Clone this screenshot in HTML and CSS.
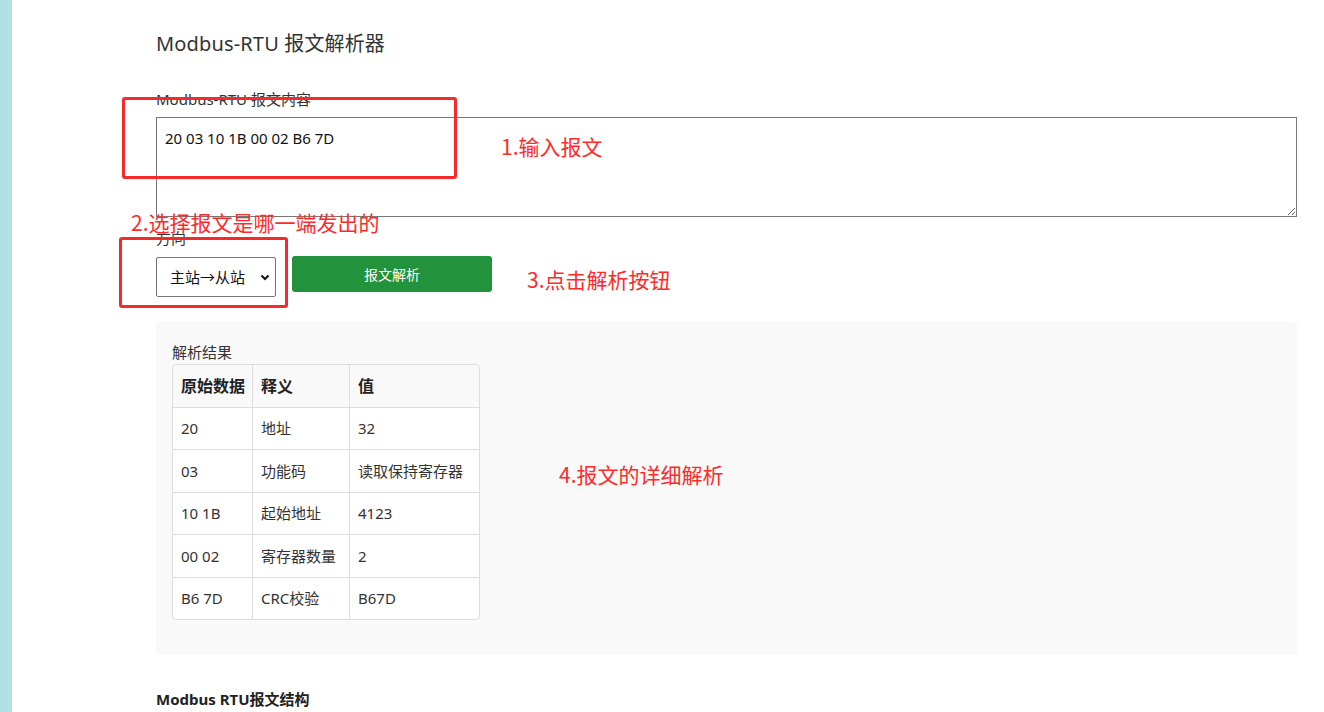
FILE: index.html
```html
<!DOCTYPE html>
<html lang="zh-CN">
<head>
<meta charset="utf-8">
<title>Modbus-RTU 报文解析器</title>
<link rel="stylesheet" href="styles.css">
</head>
<body>
<div class="page">
  <div class="sidebar"></div>
  <main class="main">
    <h1 class="title">Modbus-RTU 报文解析器</h1>
    <label class="label label-msg" for="msg">Modbus-RTU 报文内容</label>
    <textarea id="msg" class="msg">20 03 10 1B 00 02 B6 7D</textarea>
    <label class="label label-dir" for="dir">方向</label>
    <div class="controls">
      <div class="select-wrap">
        <select id="dir" class="select">
          <option>主站→从站</option>
          <option>从站→主站</option>
        </select>
        <svg class="chev" width="10" height="7" viewBox="0 0 10 7"><path d="M1.5 1.5 L5 5 L8.5 1.5" fill="none" stroke="#111" stroke-width="2"/></svg>
      </div>
      <button class="btn">报文解析</button>
    </div>
    <section class="result">
      <div class="result-title">解析结果</div>
      <table class="tbl">
        <colgroup><col class="c1"><col class="c2"><col class="c3"></colgroup>
        <thead>
          <tr><th>原始数据</th><th>释义</th><th>值</th></tr>
        </thead>
        <tbody>
          <tr><td>20</td><td>地址</td><td>32</td></tr>
          <tr><td>03</td><td>功能码</td><td>读取保持寄存器</td></tr>
          <tr><td>10 1B</td><td>起始地址</td><td>4123</td></tr>
          <tr><td>00 02</td><td>寄存器数量</td><td>2</td></tr>
          <tr><td>B6 7D</td><td>CRC校验</td><td>B67D</td></tr>
        </tbody>
      </table>
    </section>
    <h2 class="sub">Modbus RTU报文结构</h2>
  </main>

  <div class="mark mark-1"></div>
  <div class="mark mark-2"></div>
  <div class="note note-1">1.输入报文</div>
  <div class="note note-2">2.选择报文是哪一端发出的</div>
  <div class="note note-3">3.点击解析按钮</div>
  <div class="note note-4">4.报文的详细解析</div>
</div>
</body>
</html>
```

FILE: styles.css
```css
html, body {
  margin: 0;
  padding: 0;
  background: #fff;
  overflow: hidden;
}

body {
  font-family: "Noto Sans", "Noto Sans CJK SC", sans-serif;
  color: #333;
  font-size: 15px;
}

.page {
  position: relative;
  display: flex;
  width: 1324px;
  height: 712px;
  overflow: hidden;
}

.sidebar {
  width: 12px;
  flex: 0 0 12px;
  background: #b1e0e6;
}

.main {
  flex: 1;
  padding: 30px 27px 0 144px;
  display: flex;
  flex-direction: column;
  align-items: stretch;
}

.title {
  margin: 0;
  font-size: 20px;
  font-weight: normal;
  line-height: 28px;
  color: #333;
  letter-spacing: 0.15px;
}

.label {
  display: block;
  line-height: 20px;
  font-size: 15px;
  color: #333;
}

.label-msg {
  margin-top: 31px;
}

.msg {
  margin-top: 8px;
  box-sizing: border-box;
  height: 100px;
  width: 100%;
  border: 1px solid #767676;
  border-radius: 0;
  padding: 10px 8px;
  font-family: "Noto Sans", "Noto Sans CJK SC", sans-serif;
  font-size: 15px;
  line-height: 20px;
  color: #111;
  resize: vertical;
  outline: none;
}

.label-dir {
  margin-top: 11px;
}

.controls {
  margin-top: 8px;
  display: flex;
  align-items: flex-start;
  gap: 16px;
}

.select-wrap {
  position: relative;
  margin-top: 1px;
}

.select {
  appearance: none;
  -webkit-appearance: none;
  box-sizing: border-box;
  width: 120px;
  height: 40px;
  border: 1px solid #767676;
  border-radius: 2px;
  background: #fff;
  padding: 0 0 0 13px;
  font-family: "Noto Sans", "Noto Sans CJK SC", sans-serif;
  font-size: 15px;
  color: #111;
}

.chev {
  position: absolute;
  right: 6px;
  top: 17px;
  pointer-events: none;
}

.btn {
  box-sizing: border-box;
  width: 200px;
  height: 36px;
  border: none;
  border-radius: 3px;
  background: #22923c;
  color: #fff;
  font-family: "Noto Sans", "Noto Sans CJK SC", sans-serif;
  font-size: 14px;
  cursor: pointer;
}

.result {
  margin-top: 25px;
  background: #f9f9f9;
  border-radius: 4px;
  padding: 20px 16px 35px;
  height: 333px;
  box-sizing: border-box;
}

.result-title {
  line-height: 20px;
  font-size: 15px;
  color: #333;
  margin-bottom: 2px;
}

.tbl {
  border-collapse: separate;
  border-spacing: 0;
  border: 1px solid #ddd;
  border-radius: 4px;
  background: #fff;
  overflow: hidden;
  table-layout: fixed;
  width: 308px;
}

.c1 { width: 80px; }
.c2 { width: 97px; }
.c3 { width: 129px; }

.tbl th,
.tbl td {
  text-align: left;
  padding: 0 8px;
  height: 41.5px;
  line-height: 20px;
  border-right: 1px solid #ddd;
  border-bottom: 1px solid #ddd;
  white-space: nowrap;
  vertical-align: middle;
}

.tbl th:last-child,
.tbl td:last-child {
  border-right: none;
}

.tbl tbody tr:last-child td {
  border-bottom: none;
}

.tbl th {
  background: #f9f9f9;
  font-weight: bold;
  font-size: 16px;
  color: #222;
}

.tbl td {
  font-size: 15px;
  color: #333;
}

.sub {
  margin: 34px 0 0;
  font-size: 15px;
  font-weight: bold;
  line-height: 20px;
  color: #222;
}

/* annotations */
.mark {
  position: absolute;
  box-sizing: border-box;
  border: 3px solid #f52a2a;
  border-radius: 3px;
}

.mark-1 {
  left: 122px;
  top: 97px;
  width: 335px;
  height: 82px;
}

.mark-2 {
  left: 119px;
  top: 237px;
  width: 169px;
  height: 71px;
}

.note {
  position: absolute;
  color: #ff2a2a;
  font-family: "Noto Sans CJK SC", sans-serif;
  font-size: 21px;
  line-height: 28px;
  white-space: nowrap;
}

.note-1 { left: 501px; top: 132px; }
.note-2 { left: 131px; top: 208px; }
.note-3 { left: 527px; top: 265px; }
.note-4 { left: 559px; top: 460px; }
```
